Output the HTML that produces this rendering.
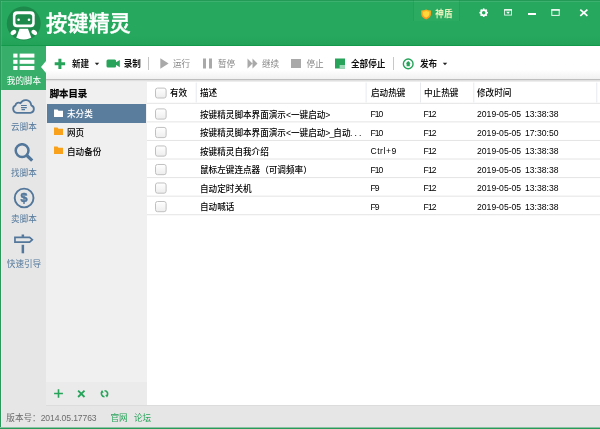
<!DOCTYPE html>
<html>
<head>
<meta charset="utf-8">
<title>按键精灵</title>
<style>
*{margin:0;padding:0;box-sizing:border-box;}
html,body{width:600px;height:429px;overflow:hidden;background:#fff;}
body{position:relative;font-family:"Liberation Sans","Noto Sans CJK SC",sans-serif;font-size:8.6px;color:#222;-webkit-font-smoothing:antialiased;}
.abs{position:absolute;}
.t{position:absolute;white-space:nowrap;line-height:12px;height:12px;}
.t.mono{display:block;}
#hdr{left:0;top:0;width:600px;height:46px;background:linear-gradient(#26a95f 0,#26a95f 76%,#22a258 97%,#22a258 100%);border-top:1px solid #239b56;}
#hdr2{left:0;top:45px;width:600px;height:1px;background:#129a4a;}
#side{left:0;top:46px;width:46px;height:383px;background:#e6e6e6;}
#sideact{left:0;top:46px;width:46px;height:44px;background:#37ae69;}
#lborder{left:0;top:0;width:1px;height:429px;background:#2a9a5b;}
#lhl{left:1px;top:90px;width:1px;height:337px;background:rgba(255,255,255,.45);}
#lhl2{left:1px;top:1px;width:1px;height:89px;background:rgba(255,255,255,.1);}
#thl{left:1px;top:1px;width:599px;height:1px;background:rgba(255,255,255,.1);}
#bborder{left:0;top:427px;width:600px;height:2px;background:linear-gradient(#8bc3a3 0,#8bc3a3 50%,#2a9a5b 50%);}
#tool{left:46px;top:46px;width:554px;height:33px;background:linear-gradient(#fff 0,#fff 72%,#f1f1f1 100%);}
#toolsh{left:46px;top:79px;width:554px;height:3px;background:linear-gradient(#bcbcbc 0,#c0c0c0 33%,#dcdcdc 40%,#e6e6e6 66%,#f4f4f4 100%);}
#dir{left:46px;top:82px;width:101px;height:323px;background:#f0f0f0;}
#dirbot{left:46px;top:382px;width:101px;height:23px;background:#ebebeb;}
#dirsel{left:47px;top:104px;width:99px;height:19px;background:#5b7d9d;}
#foot{left:1px;top:405px;width:599px;height:23px;background:#e6e6e6;}
#footl{left:46px;top:405px;width:554px;height:1px;background:#dcdcdc;}
.sl{color:#52779b;font-size:8.6px;text-align:center;width:46px;left:1px;}
.hl{position:absolute;left:147px;width:453px;height:1px;background:#e6e6e6;}
.vl{position:absolute;top:84px;width:1px;height:17px;background:#e6e6e6;}
.cb{position:absolute;left:155px;width:11.5px;height:10.5px;border:1px solid #bdbdbd;border-radius:2px;background:linear-gradient(#fff,#eee);}
.row{color:#000;font-weight:500;}
.mono{font-family:"Liberation Sans","Noto Sans CJK SC",sans-serif;font-size:8.6px;word-spacing:1.4px;letter-spacing:0.02px;color:#000;}
.gray{color:#868686;}
.grn{color:#27a35a;}
</style>
</head>
<body>
<div id="wrap" style="position:absolute;left:0;top:0;width:600px;height:429px;will-change:transform;">
<div class="abs" id="hdr"></div>
<div class="abs" id="hdr2"></div>
<div class="abs" id="side"></div>
<div class="abs" id="sideact"></div>
<div class="abs" id="tool"></div>
<div class="abs" id="toolsh"></div>
<div class="abs" id="dir"></div>
<div class="abs" id="dirbot"></div>
<div class="abs" id="dirsel"></div>
<div class="abs" id="foot"></div>
<div class="abs" id="footl"></div>
<div class="abs" id="lborder"></div>
<div class="abs" id="lhl"></div>
<div class="abs" id="lhl2"></div>
<div class="abs" id="thl"></div>
<div class="abs" id="bborder"></div>

<!-- header -->
<svg class="abs" style="left:6px;top:6px" width="36" height="36" viewBox="0 0 36 36">
<defs><clipPath id="lc"><circle cx="17.75" cy="17.4" r="16.2"/></clipPath></defs>
<circle cx="17.75" cy="17.4" r="17" fill="#1d8a4b"/>
<rect x="6.9" y="5.2" width="21.8" height="16.1" rx="4" fill="#fff"/>
<rect x="9.4" y="8.2" width="16.8" height="10.4" rx="2.6" fill="#1d8a4b"/>
<circle cx="12.6" cy="13.8" r="1.3" fill="#fff"/>
<circle cx="23" cy="13.8" r="1.3" fill="#fff"/>
<g clip-path="url(#lc)"><path d="M13.6 22.7 H22 L26.6 35 H9 Z" fill="#fff"/></g>
<ellipse cx="7.4" cy="26.4" rx="3.1" ry="2.2" transform="rotate(-40 7.4 26.4)" fill="#fff"/>
<ellipse cx="28.3" cy="26.4" rx="3.1" ry="2.2" transform="rotate(40 28.3 26.4)" fill="#fff"/>
</svg>
<div class="t" style="left:46px;top:8.5px;font-size:21.2px;line-height:30px;height:30px;color:#fff;font-weight:500;-webkit-text-stroke:0.4px #fff;">按键精灵</div>

<div class="abs" style="left:413px;top:0;width:47px;height:21px;background:rgba(255,255,255,.025);border-left:1px solid rgba(0,0,0,.07);border-right:1px solid rgba(0,0,0,.07);"></div>
<svg class="abs" style="left:421.3px;top:8.6px" width="11" height="11" viewBox="0 0 11 11"><defs><linearGradient id="shg" x1="0" y1="0" x2="0" y2="1"><stop offset="0" stop-color="#ffb31e"/><stop offset="1" stop-color="#ff8f1c"/></linearGradient></defs><path d="M5.1 0.4 Q7.5 1.6 9.9 1.5 V5.6 Q9.7 8.8 5.1 10.6 Q0.5 8.8 0.3 5.6 V1.5 Q2.7 1.6 5.1 0.4 Z" fill="url(#shg)"/><path d="M5.1 2.1 Q6.8 2.8 8.3 2.8 V5.5 Q8.1 7.6 5.1 8.8 Q2.1 7.6 1.9 5.5 V2.8 Q3.4 2.8 5.1 2.1 Z" fill="#ffd83c"/></svg>
<div class="t" style="left:435.3px;top:7.7px;color:#e9f2bd;font-size:8.6px;font-weight:700;">神盾</div>

<svg class="abs" style="left:478.9px;top:8px" width="9.4" height="9.4" viewBox="0 0 12 12"><g fill="#fff"><circle cx="6" cy="6" r="4.5"/><g><rect x="5" y="0.5" width="2" height="11"/><rect x="5" y="0.5" width="2" height="11" transform="rotate(45 6 6)"/><rect x="5" y="0.5" width="2" height="11" transform="rotate(90 6 6)"/><rect x="5" y="0.5" width="2" height="11" transform="rotate(135 6 6)"/></g></g><circle cx="6" cy="6" r="2.3" fill="#27a95f"/></svg>
<svg class="abs" style="left:504px;top:9px" width="9" height="7" viewBox="0 0 9 7"><rect x="0.6" y="0.9" width="6.9" height="5.2" fill="none" stroke="#fff" stroke-opacity=".9" stroke-width="0.9"/><rect x="0.15" y="0.2" width="7.8" height="1.3" fill="#fff"/><path d="M2.2 2.8 H5.9 L4.05 4.9 Z" fill="#fff"/></svg>
<div class="abs" style="left:528px;top:12.7px;width:8.3px;height:2px;background:#fff;"></div>
<svg class="abs" style="left:551px;top:9px" width="9" height="7" viewBox="0 0 9 7"><rect x="0.8" y="0.8" width="7.4" height="5.6" fill="none" stroke="#fff" stroke-opacity=".9" stroke-width="1"/><rect x="0.3" y="0.2" width="8.4" height="1.5" fill="#fff" fill-opacity=".9"/></svg>
<svg class="abs" style="left:579px;top:8px" width="10" height="9" viewBox="0 0 10 9"><path d="M1.3 1.6 L8.4 7.9 M8.4 1.6 L1.3 7.9" stroke="#fff" stroke-width="1.7"/></svg>

<!-- sidebar -->
<svg class="abs" style="left:13px;top:53px" width="22" height="18" viewBox="0 0 22 18"><g fill="#fff"><rect x="0.3" y="0.6" width="4.2" height="4"/><rect x="6.6" y="0.6" width="14.8" height="4"/><rect x="0.3" y="6.8" width="4.2" height="4"/><rect x="6.6" y="6.8" width="14.8" height="4"/><rect x="0.3" y="13" width="4.2" height="4"/><rect x="6.6" y="13" width="14.8" height="4"/></g></svg>
<svg class="abs" style="left:41px;top:61px" width="5" height="12" viewBox="0 0 5 12"><path d="M5 0 L0 6 L5 12 Z" fill="#fff"/></svg>
<div class="t sl" style="top:75px;left:1px;color:#fff;">我的脚本</div>

<svg class="abs" style="left:11px;top:98px" width="26" height="17" viewBox="0 0 26 17"><path d="M5.7 14.8 A3.9 3.9 0 0 1 4.4 7.4 A3.3 3.3 0 0 1 9.6 5.2 A5.6 5.6 0 0 1 20.2 7.3 A3.85 3.85 0 0 1 19.4 14.8 Z" fill="none" stroke="#52779b" stroke-width="1.8" stroke-linejoin="round"/><path d="M10 7.5 H15.8 M10 9.6 H15.8 M10.5 11.6 H14" stroke="#52779b" stroke-width="1.1"/></svg>
<div class="t sl" style="top:120.5px;">云脚本</div>

<svg class="abs" style="left:14px;top:143px" width="20" height="20" viewBox="0 0 20 20"><circle cx="8.1" cy="7.6" r="6.4" fill="none" stroke="#52779b" stroke-width="2.5"/><path d="M12.4 12 L18.2 17.6" stroke="#52779b" stroke-width="3.2"/></svg>
<div class="t sl" style="top:167px;">找脚本</div>

<svg class="abs" style="left:13px;top:187px" width="23" height="23" viewBox="0 0 23 23"><circle cx="11.1" cy="11" r="9.4" fill="none" stroke="#52779b" stroke-width="1.9"/><text x="11.1" y="15" font-family="Liberation Sans, sans-serif" font-weight="bold" font-size="12.5" text-anchor="middle" fill="#52779b" stroke="#52779b" stroke-width="0.5">$</text></svg>
<div class="t sl" style="top:212.5px;">卖脚本</div>

<svg class="abs" style="left:13px;top:234px" width="22" height="21" viewBox="0 0 22 21"><path d="M1.95 3.35 H16.6 L19.3 5.7 L16.6 8.05 H1.95 Z" fill="none" stroke="#52779b" stroke-width="1.7" stroke-linejoin="miter"/><rect x="8.6" y="0.5" width="2.5" height="2.4" fill="#52779b"/><rect x="8.6" y="10.8" width="2.5" height="8.5" fill="#52779b"/></svg>
<div class="t sl" style="top:258px;">快速引导</div>

<!-- toolbar -->
<svg class="abs" style="left:54px;top:58px" width="12" height="12" viewBox="0 0 12 12"><path d="M5.9 0.8 V10.9 M0.7 5.85 H11.1" stroke="#27a35a" stroke-width="3"/></svg>
<div class="t" style="left:72px;top:58px;color:#111;font-weight:700;">新建</div>
<svg class="abs" style="left:93.5px;top:62.4px" width="6" height="4" viewBox="0 0 6 4"><path d="M0.8 0.7 H5.2 L3 3.2 Z" fill="#222"/></svg>
<svg class="abs" style="left:106px;top:58px" width="15" height="11" viewBox="0 0 15 11"><rect x="0.5" y="1.5" width="9.6" height="8" rx="1.5" fill="#27a35a"/><path d="M9.5 4.6 L13.8 2 V9.2 L9.5 6.6 Z" fill="#27a35a"/></svg>
<div class="t" style="left:123.7px;top:58px;color:#111;font-weight:700;">录制</div>
<div class="abs" style="left:148px;top:57px;width:1px;height:13px;background:#c4c4c4;"></div>

<svg class="abs" style="left:160px;top:58px" width="9" height="11" viewBox="0 0 9 11"><path d="M0.3 0.3 L8.6 5.5 L0.3 10.7 Z" fill="#a9a9a9"/></svg>
<div class="t gray" style="left:173px;top:58px;">运行</div>
<svg class="abs" style="left:203px;top:58px" width="10" height="11" viewBox="0 0 10 11"><rect x="0" y="0.5" width="3" height="10" fill="#a9a9a9"/><rect x="6" y="0.5" width="3" height="10" fill="#a9a9a9"/></svg>
<div class="t gray" style="left:218px;top:58px;">暂停</div>
<svg class="abs" style="left:246.5px;top:58px" width="11" height="11" viewBox="0 0 11 11"><path d="M0.5 0.5 L5.5 5.5 L0.5 10.5 Z M5.5 0.5 L10.5 5.5 L5.5 10.5 Z" fill="#a9a9a9"/></svg>
<div class="t gray" style="left:262px;top:58px;">继续</div>
<div class="abs" style="left:291px;top:59px;width:10px;height:9.4px;background:#a9a9a9;"></div>
<div class="t gray" style="left:306.5px;top:58px;">停止</div>
<svg class="abs" style="left:335px;top:58px" width="11" height="11" viewBox="0 0 11 11"><rect x="0" y="0.5" width="10" height="10" fill="#27a35a"/><rect x="4.6" y="7" width="5.4" height="3.5" fill="#9bd8b6"/></svg>
<div class="t" style="left:351px;top:58px;color:#111;font-weight:700;">全部停止</div>
<div class="abs" style="left:393px;top:57px;width:1px;height:13px;background:#c8c8c8;"></div>
<svg class="abs" style="left:401px;top:57px" width="14" height="14" viewBox="0 0 14 14"><circle cx="7.2" cy="6.9" r="4.85" fill="none" stroke="#27a35a" stroke-width="1.4"/><path d="M7.2 3.9 L9.7 6.6 H8.8 V9.2 H5.6 V6.6 H4.7 Z" fill="#27a35a"/></svg>
<div class="t" style="left:420px;top:58px;color:#111;font-weight:700;">发布</div>
<svg class="abs" style="left:441.6px;top:62.4px" width="6" height="4" viewBox="0 0 6 4"><path d="M0.8 0.7 H5.2 L3 3.2 Z" fill="#222"/></svg>

<!-- directory -->
<div class="t" style="left:49.7px;top:87.7px;font-weight:bold;font-size:9.4px;color:#000;-webkit-text-stroke:0.25px #000;">脚本目录</div>
<svg class="abs" style="left:54px;top:108.8px" width="9" height="8" viewBox="0 0 9 8"><path d="M0 0.5 H3.5 L4.5 1.8 H9 V8 H0 Z" fill="#fff"/></svg>
<div class="t" style="left:67px;top:108px;color:#fff;font-weight:500;">未分类</div>
<svg class="abs" style="left:54px;top:127.4px" width="9" height="8" viewBox="0 0 9 8"><path d="M0 0.5 H3.5 L4.5 1.8 H9 V8 H0 Z" fill="#f9a11b"/></svg>
<div class="t row" style="left:67px;top:127px;">网页</div>
<svg class="abs" style="left:54px;top:146px" width="9" height="8" viewBox="0 0 9 8"><path d="M0 0.5 H3.5 L4.5 1.8 H9 V8 H0 Z" fill="#f9a11b"/></svg>
<div class="t row" style="left:67px;top:145.6px;">自动备份</div>

<svg class="abs" style="left:54.3px;top:389.3px" width="9" height="9" viewBox="0 0 9 9"><path d="M4.5 0.2 V8.8 M0.1 4.5 H8.9" stroke="#27a35a" stroke-width="1.6"/></svg>
<svg class="abs" style="left:77.3px;top:389.3px" width="9" height="9" viewBox="0 0 9 9"><path d="M1.1 1.6 L7.5 8 M7.5 1.6 L1.1 8" stroke="#27a35a" stroke-width="1.8"/></svg>
<svg class="abs" style="left:100.3px;top:389.3px" width="9" height="9" viewBox="0 0 9 9"><g transform="rotate(90 4.5 4.7)"><path d="M1.5 4.7 A3 3 0 0 1 6.5 2.4 M7.5 4.7 A3 3 0 0 1 2.5 7" fill="none" stroke="#27a35a" stroke-width="1.6"/><path d="M5.5 0.7 L8.3 2.2 L5.8 4 Z M3.5 8.7 L0.7 7.2 L3.2 5.4 Z" fill="#27a35a"/></g></svg>

<!-- table -->
<div class="t row" style="left:170px;top:87px;">有效</div>
<div class="t row" style="left:200px;top:87px;">描述</div>
<div class="t row" style="left:371px;top:87px;">启动热键</div>
<div class="t row" style="left:424px;top:87px;">中止热键</div>
<div class="t row" style="left:477px;top:87px;">修改时间</div>


<div class="t row" style="left:200px;top:108.60px;">按键精灵脚本界面演示&lt;一键启动&gt;</div>
<div class="t mono" style="left:370.4px;top:108.00px;letter-spacing:-0.9px;">F10</div>
<div class="t mono" style="left:423.6px;top:108.00px;letter-spacing:-0.9px;">F12</div>
<div class="t mono" style="left:477px;top:108.00px;">2019-05-05 13:38:38</div>

<div class="t row" style="left:200px;top:127.15px;">按键精灵脚本界面演示&lt;一键启动<span style="letter-spacing:-0.9px">&gt;_</span>自动<span style="letter-spacing:2.1px;margin-left:-0.5px">...</span></div>
<div class="t mono" style="left:370.4px;top:126.55px;letter-spacing:-0.9px;">F10</div>
<div class="t mono" style="left:423.6px;top:126.55px;letter-spacing:-0.9px;">F12</div>
<div class="t mono" style="left:477px;top:126.55px;">2019-05-05 17:30:50</div>

<div class="t row" style="left:200px;top:145.70px;">按键精灵自我介绍</div>
<div class="t mono" style="left:370.4px;top:145.10px;letter-spacing:0.55px;">Ctrl+9</div>
<div class="t mono" style="left:423.6px;top:145.10px;letter-spacing:-0.9px;">F12</div>
<div class="t mono" style="left:477px;top:145.10px;">2019-05-05 13:38:38</div>

<div class="t row" style="left:200px;top:164.25px;">鼠标左键连点器（可调频率）</div>
<div class="t mono" style="left:370.4px;top:163.65px;letter-spacing:-0.9px;">F10</div>
<div class="t mono" style="left:423.6px;top:163.65px;letter-spacing:-0.9px;">F12</div>
<div class="t mono" style="left:477px;top:163.65px;">2019-05-05 13:38:38</div>

<div class="t row" style="left:200px;top:182.80px;">自动定时关机</div>
<div class="t mono" style="left:370.4px;top:182.20px;letter-spacing:-0.9px;">F9</div>
<div class="t mono" style="left:423.6px;top:182.20px;letter-spacing:-0.9px;">F12</div>
<div class="t mono" style="left:477px;top:182.20px;">2019-05-05 13:38:38</div>

<div class="t row" style="left:200px;top:201.35px;">自动喊话</div>
<div class="t mono" style="left:370.4px;top:200.75px;letter-spacing:-0.9px;">F9</div>
<div class="t mono" style="left:423.6px;top:200.75px;letter-spacing:-0.9px;">F12</div>
<div class="t mono" style="left:477px;top:200.75px;">2019-05-05 13:38:38</div>

<svg class="abs" style="left:0;top:0" width="600" height="429" viewBox="0 0 600 429"><defs><linearGradient id="cbg" x1="0" y1="0" x2="0" y2="1"><stop offset="0" stop-color="#fff"/><stop offset="1" stop-color="#ededed"/></linearGradient></defs><rect x="195.7" y="82.5" width="1" height="20" fill="#e6eaee"/><rect x="365.6" y="82.5" width="1" height="20" fill="#e6eaee"/><rect x="420.0" y="82.5" width="1" height="20" fill="#e6eaee"/><rect x="473.3" y="82.5" width="1" height="20" fill="#e6eaee"/><rect x="596.3" y="82.5" width="1" height="20" fill="#e6eaee"/><rect x="147" y="102.80" width="453" height="1" fill="#e4e4e4"/><rect x="147" y="121.37" width="453" height="1" fill="#e4e4e4"/><rect x="147" y="139.94" width="453" height="1" fill="#e4e4e4"/><rect x="147" y="158.51" width="453" height="1" fill="#e4e4e4"/><rect x="147" y="177.08" width="453" height="1" fill="#e4e4e4"/><rect x="147" y="195.65" width="453" height="1" fill="#e4e4e4"/><rect x="147" y="214.22" width="453" height="1" fill="#e4e4e4"/><rect x="155.5" y="88.1" width="10.6" height="9.9" rx="2" fill="url(#cbg)" stroke="#c0c0c0"/><rect x="155.5" y="108.90" width="10.6" height="10.2" rx="2" fill="url(#cbg)" stroke="#c0c0c0"/><rect x="155.5" y="127.42" width="10.6" height="10.2" rx="2" fill="url(#cbg)" stroke="#c0c0c0"/><rect x="155.5" y="145.94" width="10.6" height="10.2" rx="2" fill="url(#cbg)" stroke="#c0c0c0"/><rect x="155.5" y="164.46" width="10.6" height="10.2" rx="2" fill="url(#cbg)" stroke="#c0c0c0"/><rect x="155.5" y="182.98" width="10.6" height="10.2" rx="2" fill="url(#cbg)" stroke="#c0c0c0"/><rect x="155.5" y="201.50" width="10.6" height="10.2" rx="2" fill="url(#cbg)" stroke="#c0c0c0"/></svg>
<!-- footer -->
<div class="t" style="left:6.3px;top:412px;color:#6c6c6c;">版本号：<span class="mono" style="color:#6c6c6c;letter-spacing:-0.12px;">2014.05.17763</span></div>
<div class="t grn" style="left:110.5px;top:412px;">官网</div>
<div class="t grn" style="left:134px;top:412px;">论坛</div>
</div>
</body>
</html>
